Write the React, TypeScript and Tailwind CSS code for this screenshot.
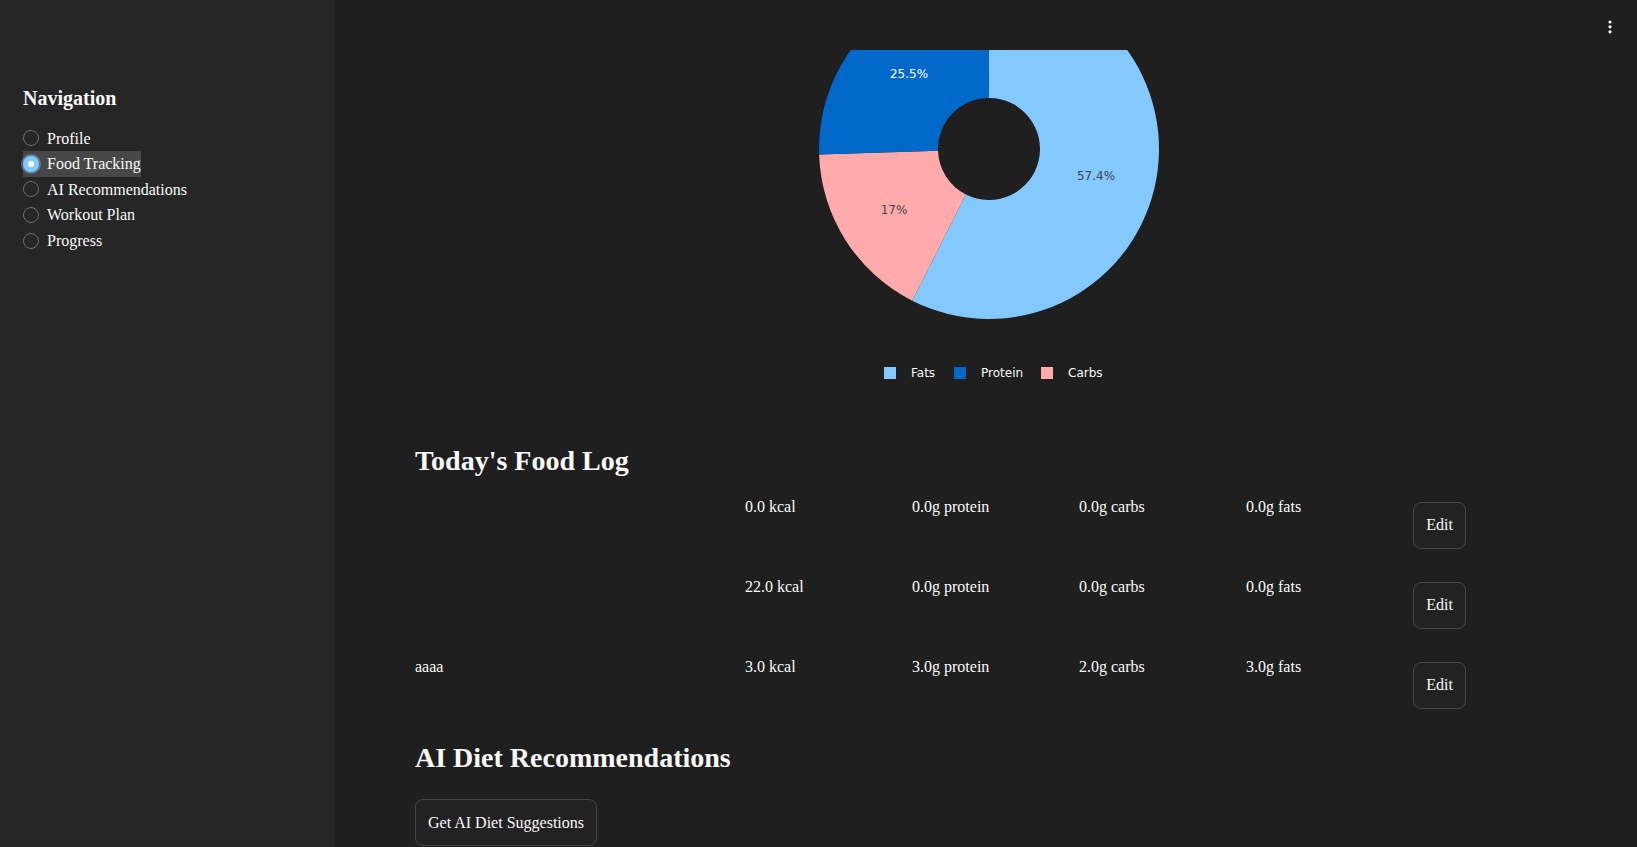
import React from "react";

const navItems = ["Profile", "Food Tracking", "AI Recommendations", "Workout Plan", "Progress"];

const foodLog = [
  { name: "", kcal: "0.0 kcal", protein: "0.0g protein", carbs: "0.0g carbs", fats: "0.0g fats" },
  { name: "", kcal: "22.0 kcal", protein: "0.0g protein", carbs: "0.0g carbs", fats: "0.0g fats" },
  { name: "aaaa", kcal: "3.0 kcal", protein: "3.0g protein", carbs: "2.0g carbs", fats: "3.0g fats" },
];

// clockwise order starting at 12 o'clock, as plotly draws it here
const slices = [
  { label: "Fats", value: 57.4, color: "#83c9ff" },
  { label: "Carbs", value: 17.0, color: "#ffabab" },
  { label: "Protein", value: 25.5, color: "#0068c9" },
];

const CX = 574;
const CY = 99;
const R = 170;
const HOLE = 51;

function pt(r: number, deg: number) {
  const a = ((deg - 90) * Math.PI) / 180;
  return [CX + r * Math.cos(a), CY + r * Math.sin(a)];
}

function slicePath(start: number, end: number) {
  const large = end - start > 180 ? 1 : 0;
  const [x1, y1] = pt(R, start);
  const [x2, y2] = pt(R, end);
  const [x3, y3] = pt(HOLE, end);
  const [x4, y4] = pt(HOLE, start);
  return `M${x1} ${y1} A${R} ${R} 0 ${large} 1 ${x2} ${y2} L${x3} ${y3} A${HOLE} ${HOLE} 0 ${large} 0 ${x4} ${y4} Z`;
}

function MacroChart() {
  const total = slices.reduce((s, x) => s + x.value, 0);
  let acc = 0;
  const arcs = slices.map((s) => {
    const start = (acc / total) * 360;
    acc += s.value;
    const end = (acc / total) * 360;
    return { ...s, start, end };
  });

  const legend = [
    { label: "Fats", color: "#83c9ff", x: 469, tx: 496 },
    { label: "Protein", color: "#0068c9", x: 539, tx: 566 },
    { label: "Carbs", color: "#ffabab", x: 626, tx: 653 },
  ];

  return (
    <svg width="1142" height="394" className="block" style={{ fontFamily: '"DejaVu Sans", Verdana, sans-serif' }}>
      {arcs.map((a) => (
        <path key={a.label} d={slicePath(a.start, a.end)} fill={a.color} />
      ))}
      <text x="494" y="28" fontSize="12" fill="#ffffff" textAnchor="middle">25.5%</text>
      <text x="681" y="130" fontSize="12" fill="#444444" textAnchor="middle">57.4%</text>
      <text x="479" y="164" fontSize="12" fill="#444444" textAnchor="middle">17%</text>
      {legend.map((l) => (
        <g key={l.label}>
          <rect x={l.x} y="317" width="12" height="12" fill={l.color} />
          <text x={l.tx} y="327" fontSize="12" fill="#fafafa">{l.label}</text>
        </g>
      ))}
    </svg>
  );
}

function Sidebar() {
  return (
    <aside className="w-[335px] shrink-0 bg-[#262626] pl-[23px] pt-[86px]">
      <h1 className="text-[20px] font-bold leading-[1.2] text-[#fafafa]">Navigation</h1>
      <div className="mt-[15.5px] flex flex-col">
        {navItems.map((item) => {
          const active = item === "Food Tracking";
          return (
            <div key={item} className="flex">
              <label className={`inline-flex h-[25.6px] items-center gap-2 ${active ? "bg-[#474747]" : ""}`}>
                {active ? (
                  <span className="flex h-4 w-4 items-center justify-center rounded-full bg-[#83c9ff] ring-2 ring-[#83c9ff]/40">
                    <span className="h-[6px] w-[6px] rounded-full bg-white" />
                  </span>
                ) : (
                  <span className="h-4 w-4 rounded-full border border-[#6e6e6e]" />
                )}
                <span className="text-[16px] leading-[1.6] text-[#fafafa]">{item}</span>
              </label>
            </div>
          );
        })}
      </div>
    </aside>
  );
}

function OutlineButton(props: { children: React.ReactNode; className?: string }) {
  return (
    <button
      className={`flex h-[47px] items-center justify-center rounded-lg border border-[#464646] bg-[#222222] px-3 text-[16px] text-[#fafafa] ${props.className ?? ""}`}
    >
      {props.children}
    </button>
  );
}

export default function App() {
  return (
    <div
      className="flex h-[847px] w-full overflow-hidden bg-[#1f1f1f] text-[#fafafa]"
      style={{ fontFamily: '"Liberation Serif", "Times New Roman", serif' }}
    >
      <Sidebar />

      <main className="flex min-w-0 flex-1 flex-col">
        <div className="flex h-[50px] shrink-0 justify-end pr-[24px] pt-[19px]">
          <svg width="6" height="16" viewBox="0 0 6 16">
            <circle cx="3" cy="3" r="1.6" fill="#fafafa" />
            <circle cx="3" cy="7.8" r="1.6" fill="#fafafa" />
            <circle cx="3" cy="12.8" r="1.6" fill="#fafafa" />
          </svg>
        </div>

        <div className="pl-[80px]">
          <MacroChart />

          <h3 className="mb-[17px] text-[28px] font-bold leading-[1.2]">Today's Food Log</h3>

          <div className="flex flex-col gap-[26px]">
            {foodLog.map((row, i) => (
              <div key={i} className="grid grid-cols-[314px_151px_151px_151px_151px_151px] items-start gap-4 text-[16px] leading-[1.5]">
                <div>{row.name}</div>
                <div>{row.kcal}</div>
                <div>{row.protein}</div>
                <div>{row.carbs}</div>
                <div>{row.fats}</div>
                <div>
                  <OutlineButton className="mt-[7px] w-[53px]">Edit</OutlineButton>
                </div>
              </div>
            ))}
          </div>

          <h3 className="mt-[32px] text-[28px] font-bold leading-[1.2]">AI Diet Recommendations</h3>

          <OutlineButton className="mt-[25px]">Get AI Diet Suggestions</OutlineButton>
        </div>
      </main>
    </div>
  );
}
